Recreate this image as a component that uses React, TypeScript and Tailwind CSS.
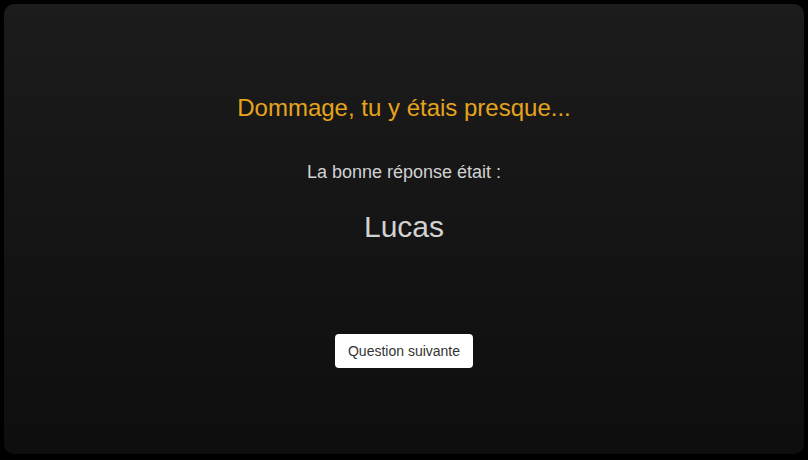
export default function App() {
  return (
    <div className="h-[460px] w-[808px] bg-black p-1 pb-[6px] font-['Liberation_Sans',Arial,sans-serif]">
      <div className="flex h-full flex-col items-center rounded-[10px] bg-gradient-to-b from-[#1c1c1c] to-[#0e0e0e] pt-[89px]">
        <h1 className="text-[24px] leading-[30px] text-[#e6a41c]">Dommage, tu y étais presque...</h1>
        <p className="mt-[39px] text-[18px] leading-[20px] text-[#d2d2d2]">La bonne réponse était :</p>
        <p className="mt-[27px] text-[30px] leading-[36px] text-[#d2d2d2]">Lucas</p>
        <button className="mt-[89px] h-[34px] rounded-[4px] bg-white px-[13px] text-[14px] text-[#333]">
          Question suivante
        </button>
      </div>
    </div>
  );
}
